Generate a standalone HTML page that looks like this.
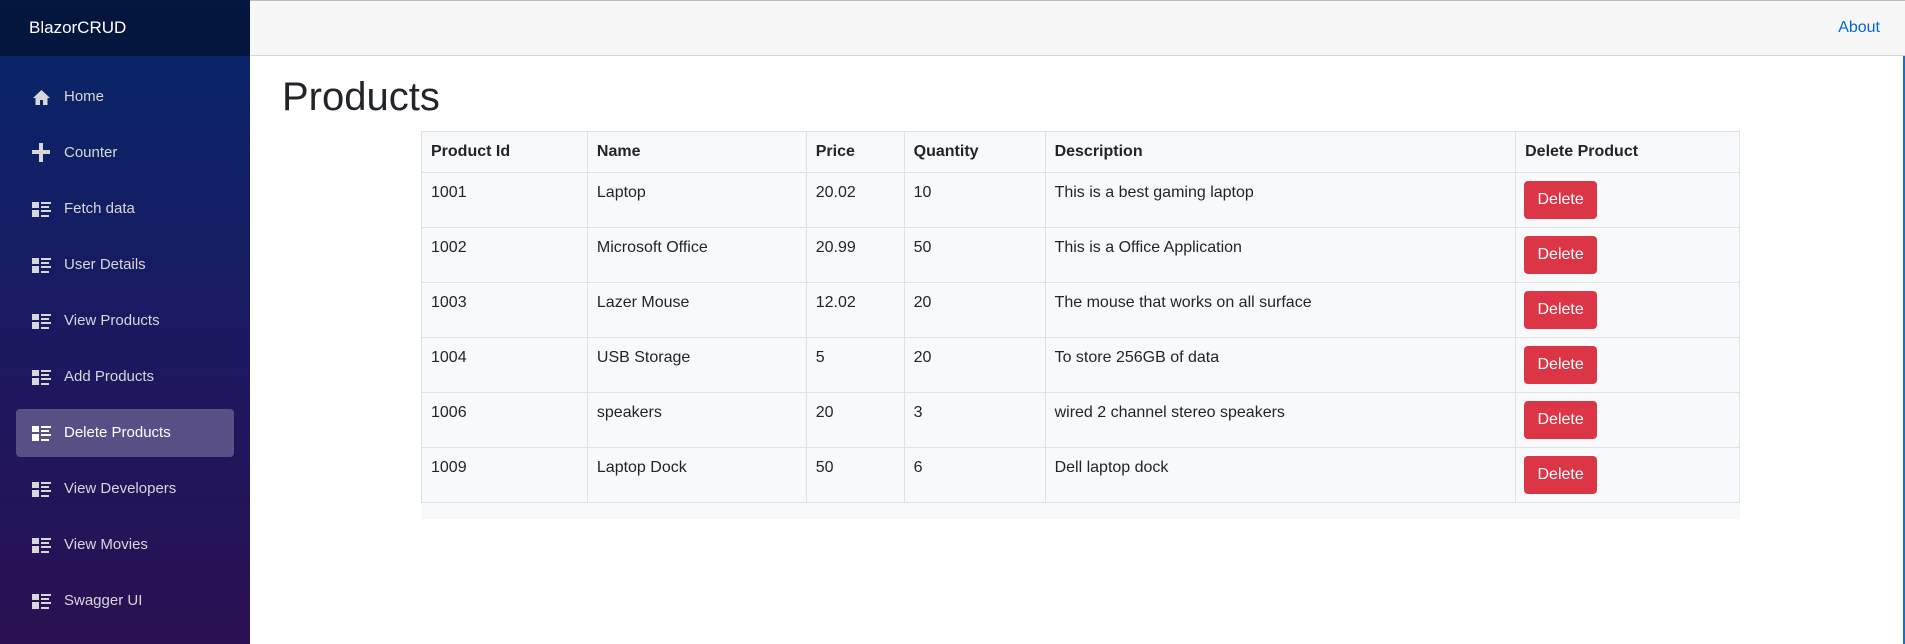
<!DOCTYPE html>
<html><head><meta charset="utf-8"><style>
*{box-sizing:border-box;margin:0;padding:0}
body{width:1905px;height:644px;overflow:hidden;font-family:"Liberation Sans",Arial,sans-serif;font-size:16px;color:#212529;background:#fff;position:relative}
.side{position:absolute;left:0;top:0;width:250px;height:644px;background:linear-gradient(180deg,#062769 0%,#1c1860 55%,#2a1153 100%)}
.brand{height:56px;background:rgba(0,0,0,.4);color:#fff;font-size:17px;padding-left:29px;line-height:56px}
.nav a{position:absolute;left:16px;width:218px;height:48px;color:#d7d7d7;font-size:15px;line-height:48px;padding-left:48px;text-decoration:none;border-radius:4px}
.nav a.act{background:rgba(255,255,255,.25);color:#fff}
.ic{position:absolute;left:16px;top:17px;width:19px;height:15px}
.ic i{position:absolute;background:#d7d7d7}
.top{position:absolute;left:250px;top:0;width:1655px;height:56px;background:#f7f7f7;border-top:1px solid #bdbdbd;border-bottom:1px solid #d6d5d5}
.about{position:absolute right:25px;top:18px;color:#0366d6;font-size:16px}
.about{position:absolute;right:25px;top:18px;color:#0366d6;font-size:16px}
.rb{position:absolute;right:0;top:56px;width:2px;height:588px;background:#1b6ec2}
h1{position:absolute;left:282px;top:75px;font-size:40px;font-weight:400}
.tw{position:absolute;left:421px;top:131px;width:1319px;height:388px;background:#f8f9fa}
table{border-collapse:collapse;width:1319px;background:#f8f9fa}
td,th{border:1px solid #dee2e6;text-align:left;vertical-align:top;padding:11px 9px 0;font-size:16px}
th{height:41px;padding-top:11px}
td{height:55px}
.btn{display:inline-block;background:#dc3545;color:#fff;border-radius:4px;width:73px;height:38px;line-height:38px;text-align:center;margin-top:-3px;margin-left:-1px}
</style></head><body>
<div class="side"><div class="brand">BlazorCRUD</div>
<div class="nav">
<a style="top:73px"><span class="ic"><svg width="19" height="17" viewBox="0 0 19 17" style="position:absolute;top:-1px"><path d="M9.5 1L1 9h2.5v7h4.5v-5h3v5h4.5V9H18z" fill="#d7d7d7"/></svg></span>Home</a>
<a style="top:129px"><span class="ic" style="top:14px;height:19px"><i style="left:7px;top:0;width:4px;height:19px"></i><i style="left:0;top:7px;width:18px;height:4px"></i></span>Counter</a>
<a style="top:185px"><span class="ic"><i style="left:0;top:0;width:7px;height:6px"></i><i style="left:0;top:8px;width:7px;height:7px"></i><i style="left:9px;top:0;width:10px;height:2px"></i><i style="left:9px;top:4px;width:8px;height:2px"></i><i style="left:9px;top:8px;width:10px;height:2px"></i><i style="left:9px;top:13px;width:8px;height:2px"></i></span>Fetch data</a>
<a style="top:241px"><span class="ic"><i style="left:0;top:0;width:7px;height:6px"></i><i style="left:0;top:8px;width:7px;height:7px"></i><i style="left:9px;top:0;width:10px;height:2px"></i><i style="left:9px;top:4px;width:8px;height:2px"></i><i style="left:9px;top:8px;width:10px;height:2px"></i><i style="left:9px;top:13px;width:8px;height:2px"></i></span>User Details</a>
<a style="top:297px"><span class="ic"><i style="left:0;top:0;width:7px;height:6px"></i><i style="left:0;top:8px;width:7px;height:7px"></i><i style="left:9px;top:0;width:10px;height:2px"></i><i style="left:9px;top:4px;width:8px;height:2px"></i><i style="left:9px;top:8px;width:10px;height:2px"></i><i style="left:9px;top:13px;width:8px;height:2px"></i></span>View Products</a>
<a style="top:353px"><span class="ic"><i style="left:0;top:0;width:7px;height:6px"></i><i style="left:0;top:8px;width:7px;height:7px"></i><i style="left:9px;top:0;width:10px;height:2px"></i><i style="left:9px;top:4px;width:8px;height:2px"></i><i style="left:9px;top:8px;width:10px;height:2px"></i><i style="left:9px;top:13px;width:8px;height:2px"></i></span>Add Products</a>
<a class="act" style="top:409px"><span class="ic"><i style="left:0;top:0;width:7px;height:6px;background:#fff"></i><i style="left:0;top:8px;width:7px;height:7px;background:#fff"></i><i style="left:9px;top:0;width:10px;height:2px;background:#fff"></i><i style="left:9px;top:4px;width:8px;height:2px;background:#fff"></i><i style="left:9px;top:8px;width:10px;height:2px;background:#fff"></i><i style="left:9px;top:13px;width:8px;height:2px;background:#fff"></i></span>Delete Products</a>
<a style="top:465px"><span class="ic"><i style="left:0;top:0;width:7px;height:6px"></i><i style="left:0;top:8px;width:7px;height:7px"></i><i style="left:9px;top:0;width:10px;height:2px"></i><i style="left:9px;top:4px;width:8px;height:2px"></i><i style="left:9px;top:8px;width:10px;height:2px"></i><i style="left:9px;top:13px;width:8px;height:2px"></i></span>View Developers</a>
<a style="top:521px"><span class="ic"><i style="left:0;top:0;width:7px;height:6px"></i><i style="left:0;top:8px;width:7px;height:7px"></i><i style="left:9px;top:0;width:10px;height:2px"></i><i style="left:9px;top:4px;width:8px;height:2px"></i><i style="left:9px;top:8px;width:10px;height:2px"></i><i style="left:9px;top:13px;width:8px;height:2px"></i></span>View Movies</a>
<a style="top:577px"><span class="ic"><i style="left:0;top:0;width:7px;height:6px"></i><i style="left:0;top:8px;width:7px;height:7px"></i><i style="left:9px;top:0;width:10px;height:2px"></i><i style="left:9px;top:4px;width:8px;height:2px"></i><i style="left:9px;top:8px;width:10px;height:2px"></i><i style="left:9px;top:13px;width:8px;height:2px"></i></span>Swagger UI</a>
</div></div>
<div class="top"><span class="about">About</span></div>
<div class="rb"></div>
<h1>Products</h1>
<div class="tw"><table>
<colgroup><col style="width:166px"><col style="width:219px"><col style="width:98px"><col style="width:141px"><col style="width:471px"><col style="width:224px"></colgroup>
<tr><th>Product Id</th><th>Name</th><th>Price</th><th>Quantity</th><th>Description</th><th>Delete Product</th></tr>
<tr><td>1001</td><td>Laptop</td><td>20.02</td><td>10</td><td>This is a best gaming laptop</td><td><span class="btn">Delete</span></td></tr>
<tr><td>1002</td><td>Microsoft Office</td><td>20.99</td><td>50</td><td>This is a Office Application</td><td><span class="btn">Delete</span></td></tr>
<tr><td>1003</td><td>Lazer Mouse</td><td>12.02</td><td>20</td><td>The mouse that works on all surface</td><td><span class="btn">Delete</span></td></tr>
<tr><td>1004</td><td>USB Storage</td><td>5</td><td>20</td><td>To store 256GB of data</td><td><span class="btn">Delete</span></td></tr>
<tr><td>1006</td><td>speakers</td><td>20</td><td>3</td><td>wired 2 channel stereo speakers</td><td><span class="btn">Delete</span></td></tr>
<tr><td>1009</td><td>Laptop Dock</td><td>50</td><td>6</td><td>Dell laptop dock</td><td><span class="btn">Delete</span></td></tr>
</table></div>
</body></html>
